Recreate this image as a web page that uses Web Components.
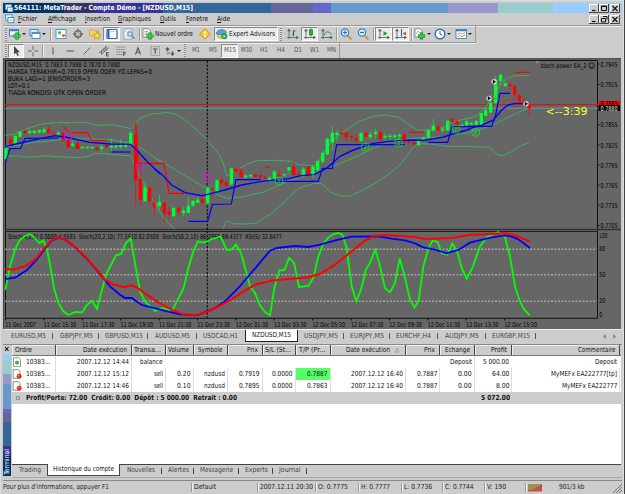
<!DOCTYPE html>
<html lang="fr">
<head>
<meta charset="utf-8">
<title>MetaTrader</title>
<style>
  body {
    margin: 0;
    width: 625px;
    height: 494px;
    overflow: hidden;
    background: #ccc;
    color: #111;
    font: 7px "DejaVu Sans Condensed", "DejaVu Sans", sans-serif;
  }
</style>
</head>
<body>
<meta-window></meta-window>

<script>
// ---------- icons, all on a 14x12 grid ----------
const plus = (x, y) => `<path d="M${x} ${y - 3.5}v7M${x - 3.5} ${y}h7" stroke="#087a12" stroke-width="3.2"/><path d="M${x} ${y - 3}v6M${x - 3} ${y}h6" stroke="#2fd437" stroke-width="1.8"/>`;
const axes = '<path d="M3 1.5v9.5M1 9.5h11M3 1l-1.3 2h2.6zM12.500 9.500l-2-1.200v2.400z" stroke="#555" stroke-width=".8"/>';
const ICONS = {
  newchart: `<rect x="1.500" y="1.500" width="9" height="6.500" fill="#eaf4fc" stroke="#3f86c4"/><path d="M1.500 2.500h9" stroke="#3f86c4" stroke-width="1.500"/>${plus(9, 8)}`,
  profiles: '<rect x="2" y="1.500" width="8" height="6" fill="#dceefb" stroke="#3f86c4"/><rect x="4" y="4.500" width="8" height="6" fill="#fff" stroke="#4a90d0"/><path d="M4 5.200h8" stroke="#4a90d0" stroke-width="1.500"/>',
  market: '<rect x="2" y="1.500" width="10" height="9" fill="#fff" stroke="#3c9bd0"/><path d="M4 5l1.500-2 1.500 2zM4 6h3" fill="#18b028" stroke="#18b028" stroke-width=".6"/><path d="M8 7l1.500 2 1.500-2z" fill="#f04020" stroke="#f04020"/>',
  cross: '<circle cx="7" cy="6" r="3.300" stroke="#555" stroke-width="1.100"/><path d="M7 .8v4M7 7.200v4M1.800 6h4M8.200 6h4" stroke="#555"/>',
  folder: '<path d="M1.500 2h4l1 1h4v5h-9z" fill="#f8d468" stroke="#c99a28" stroke-width=".8"/><path d="M9 3.500l1.200 2.500 2.800.3-2.100 1.900.6 2.800L9 9.700 6.500 11l.6-2.800L5 6.300 7.800 6z" fill="#ffe04a" stroke="#c48a12" stroke-width=".7"/>',
  navigator: '<rect x="2" y="1.500" width="10" height="9" rx="1" fill="#fff" stroke="#2c66b8" stroke-width="1.200"/><path d="M3.500 2v8" stroke="#2c66b8" stroke-width="2"/><path d="M5.500 3.500h5" stroke="#b8d0ec"/>',
  tester: '<rect x="2" y="1" width="8" height="10" fill="#eef6fc" stroke="#6fa4cc" stroke-width=".8"/><path d="M3.500 3l2 1.500 2-1.500M3.500 8h3" stroke="#d0a24c" stroke-width=".8"/><circle cx="8" cy="6" r="2.300" fill="#bfe2fa" stroke="#5088b8"/><path d="M10 8l2.500 2.500" stroke="#5088b8" stroke-width="1.500"/>',
  order: `<path d="M2 .8h5.500l2 2V9H2z" fill="#fff" stroke="#777" stroke-width=".8"/><path d="M3.500 3.500h3.500M3.500 5h4M3.500 6.500h3" stroke="#888" stroke-width=".7"/>${plus(9, 8)}`,
  diamond: '<path d="M7 .8L12.300 6 7 11.200 1.700 6z" fill="#fbcf28" stroke="#d08f10"/><path d="M7 3v3.700M7 7.600V9" stroke="#fff" stroke-width="1.500"/>',
  expert: '<path d="M2 6.500c.5 5 7 5 8 0z" fill="#f6cf52" stroke="#b98b18" stroke-width=".7"/><path d="M1 5.500C2 1 10 0 11.500 4.500 9 7 4 7 1 5.500z" fill="#4fa5d8" stroke="#2c76ac" stroke-width=".7"/><circle cx="9.300" cy="8.300" r="3" fill="#20a52c"/><path d="M8.500 6.900v2.800l2.300-1.400z" fill="#fff"/>',
  bars: `${axes}<path d="M7.500 2v6M6 6.500h1.500M7.500 3H9.500" stroke="#128a22" stroke-width="1.200"/>`,
  candles: `${axes}<path d="M8 .5v8" stroke="#128a22"/><rect x="6.500" y="1.800" width="3" height="5" fill="#20b830" stroke="#128a22" stroke-width=".8"/>`,
  line: `${axes}<path d="M4 7.500C6 3 8 2.500 11.500 6.500" stroke="#1b9a2b"/>`,
  zoomin: '<path d="M8.500 7.500l4 3.800" stroke="#cf9a2a" stroke-width="2.200"/><circle cx="6" cy="4.500" r="3.700" fill="#d9eeff" stroke="#3583cc" stroke-width="1.200"/><path d="M4 4.500h4M6 2.500v4" stroke="#2a6fc0" stroke-width="1.200"/>',
  zoomout: '<path d="M8.500 7.500l4 3.800" stroke="#cf9a2a" stroke-width="2.200"/><circle cx="6" cy="4.500" r="3.700" fill="#d9eeff" stroke="#3583cc" stroke-width="1.200"/><path d="M4 4.500h4" stroke="#2a6fc0" stroke-width="1.200"/>',
  scroll: `${axes}<path d="M6.500 3v5l4-2.500z" fill="#18a52c"/>`,
  shift: `${axes}<path d="M7.500 1v7.500" stroke="#2a6fb0" stroke-width="1.200"/><path d="M12 3.500L8.500 5.500l3.500 2z" fill="#d0551c"/>`,
  indicators: `<path d="M2 .8h5l2 2V9H2z" fill="#fff" stroke="#777" stroke-width=".8"/><path d="M3.500 6c1-4 2.500-3 3-1" stroke="#888" stroke-width=".7"/>${plus(8.500, 8)}`,
  clock: '<circle cx="7" cy="6" r="4.800" fill="#fff" stroke="#2b70cc" stroke-width="1.500"/><path d="M7 3v3.200l2.300 1" stroke="#444" stroke-width=".9"/>',
  template: '<rect x="2" y="1.500" width="10.500" height="9" fill="#fff" stroke="#3f80c0" stroke-width=".9"/><path d="M2 2.500h10.500" stroke="#3f80c0" stroke-width="1.600"/><path d="M3.500 6l2.500-1 2 1 3-1.500" stroke="#d07a3a" stroke-width=".8"/><path d="M3.500 9l2-1.500L8 8.500l3-1.500" stroke="#2da73c" stroke-width=".8"/>',
  cursor: '<path d="M5 1v8.500l2-1.800 1.500 3.300 1.300-.6L8.300 7.200H11z" fill="#444"/>',
  plain: '<path d="M7 .8v4M7 7.200v4M1.800 6h4M8.200 6h4" stroke="#666"/>',
  vline: '<path d="M7 2.500v7" stroke="#555"/>',
  hline: '<path d="M3.500 6h7.500" stroke="#555"/>',
  trend: '<path d="M3.500 9.500l7-7" stroke="#666"/>',
  channel: '<path d="M2 8l8-7M4 9.500l8-7M4.500 5v4M7 3v4M9 1.500v4" stroke="#555" stroke-width=".8"/><path d="M11.800 7.500H9.500v3.500h2.500M9.500 9.200h2" stroke="#444" stroke-width=".8"/>',
  fibo: '<path d="M2.500 2H11M2.500 4.500H11M2.500 7H11M2.500 9.500H8" stroke="#777" stroke-width=".8" stroke-dasharray="1.500 .5"/><path d="M12 7.500H9.500V11M9.500 9.200h2" stroke="#444" stroke-width=".8"/>',
  text: '<path d="M4.500 9.500L7 2.800l2.500 6.700M5.500 7.200h3" stroke="#555" stroke-width="1.100"/>',
  label: '<rect x="3" y="1.500" width="8.500" height="9" stroke="#777" stroke-width=".8" stroke-dasharray="1 .7"/><path d="M5 4h4.500M7.200 4v4.700" stroke="#555" stroke-width="1.100"/>',
  arrows: '<path d="M2 4.500L4.500 2 7 4.500H5.300V6.500H3.700v-2zM7 8.500h1.700v-2h1.600v2H12L9.500 11z" fill="#555"/><path d="M4 8l1 1 2-2" stroke="#555" stroke-width=".8"/>',
  app: '<rect x="2" y="1" width="8.500" height="7" fill="#e8f6ff" stroke="#4a9bd8" stroke-width="1.300"/><rect x="5" y="4.500" width="7.500" height="6.500" fill="#fff" stroke="#3f86c4" stroke-width="1.200"/><path d="M6.500 8h4.500" stroke="#6ab0e0"/>',
  deposit: '<path d="M3 .8h6l2 2v8.500H3z" fill="#fff" stroke="#777" stroke-width=".9"/><circle cx="7" cy="6.500" r="2.200" fill="#159a28"/><circle cx="7" cy="6.500" r=".7" fill="#fff"/>',
  sell: '<path d="M2.500 .8h6l2 2v8H2.500z" fill="#fff" stroke="#666" stroke-width=".9"/><circle cx="9.500" cy="8.500" r="2.900" fill="#e2321c"/><circle cx="8.800" cy="7.800" r=".9" fill="#ff9c80"/>',
  ring: '<circle cx="7" cy="6" r="2" stroke="#888" stroke-width="1.200"/>'
};
const icon = (name, w = 14) => `<svg width="${w}" height="${w * 12 / 14}" viewBox="0 0 14 12" fill="none">${ICONS[name]}</svg>`;
const fit = (text, w, cls = "") => `<fit-text w="${w}" class="${cls}">${text}</fit-text>`;

// ---------- title bar + menu ----------
class TitleBar extends HTMLElement {
  constructor() {
    super();
    this.attachShadow({ mode: "open" }).innerHTML = `
    <style>
      :host { display: block; }
      .title, .menu { display: flex; align-items: center; box-sizing: border-box; }
      .title {
        height: 10px;
        padding-left: 1px;
        color: #fff;
        font-weight: bold;
        background: linear-gradient(90deg, #036 0 61px, #336 61px 92px, #339 92px 160px, #369 160px 268px,
          #669 268px 310px, #66c 310px 328px, #69c 328px 445px, #99c 445px 495px, #9cc 495px 550px, #9cf 550px);
      }
      .menu { height: 13px; padding-left: 1px; border-bottom: 1px solid #999; box-shadow: 0 1px #eee; }
      .title svg { margin-right: 0; }
      .menu fit-text { margin-left: 3px; }
      u { text-decoration-thickness: .6px; text-underline-offset: 1px; }
      .boxes { margin-left: auto; display: flex; padding-right: 2px; }
      .boxes svg { margin: 0; background: #ccc; }
      .boxes svg:last-child { margin-left: 1px; }
    </style>
    <div class="title">${icon("app", 10)}${fit("564111: MetaTrader - Compte Démo - [NZDUSD,M15]", 179)}${this.boxes('<path d="M2.500 2h5v4.500h-5zM2.500 2.500h5" stroke="#111"/>')}</div>
    <div class="menu">${icon("app", 11)}${[["Fichier", 19, 11], ["Affichage", 28, 8.500], ["Insertion", 25, 8.500], ["Graphiques", 33, 9], ["Outils", 16, 10], ["Fenetre", 22, 9], ["Aide", 13, 0]]
      .map(([t, w, g]) => `<fit-text w="${w}" style="margin-right:${g - 3}px"><u>${t[0]}</u>${t.slice(1)}</fit-text>`).join("")}${this.boxes('<path d="M4 1.500h4v3M2.500 3.500h4v3.500h-4z" stroke="#111"/>')}</div>`;
  }

  boxes(middle) {
    const box = (glyph) => `<svg width="10" height="9" viewBox="0 0 10 9" fill="none"><path d="M.5 8.500V.5h9" stroke="#fff"/><path d="M0 8.500h9.500V0" stroke="#444"/>${glyph}</svg>`;
    return `<div class="boxes">${box('<path d="M3 6.500h3.500" stroke="#111" stroke-width="1.200"/>')}${box(middle)}${box('<path d="M2.500 2l5 5M7.500 2l-5 5" stroke="#111" stroke-width="1.100"/>')}</div>`;
  }
}

// ---------- toolbar pieces ----------
class ToolButton extends HTMLElement {
  connectedCallback() {
    const name = this.getAttribute("icon");
    this.attachShadow({ mode: "open" }).innerHTML = `
    <style>
      :host { display: flex; align-items: center; justify-content: center; height: 14px; box-sizing: border-box; flex: none; }
      :host([caret]), :host([wide]) { justify-content: flex-start; }
      :host([on]) { background: #ececec; border: 1px solid; border-color: #888 #fff #fff #888; }
      svg { flex: none; }
      .caret { border: 2px solid transparent; border-top-color: #222; border-bottom: 0; }
    </style>
    ${name ? icon(name) : ""}<slot></slot>${this.hasAttribute("caret") ? '<i class="caret"></i>' : ""}`;
  }
}

class ToolGap extends HTMLElement {
  constructor() {
    super();
    this.attachShadow({ mode: "open" }).innerHTML = `
    <style>
      :host { display: flex; justify-content: center; flex: none; height: 13px; }
      i { width: 1px; background: #999; box-shadow: 1px 0 #eee; }
      :host([grip]) i { width: 2px; background: repeating-linear-gradient(#888 0 1px, #ddd 1px 2px); box-shadow: none; }
      :host([blank]) i { display: none; }
    </style><i></i>`;
  }
}

class ToolBars extends HTMLElement {
  constructor() {
    super();
    const b = (name, w = 17, attrs = "", body = "") => `<tool-button icon="${name}" style="width:${w}px" ${attrs}>${body}</tool-button>`;
    const gap = (w, attrs = "") => `<tool-gap style="width:${w}px" ${attrs}></tool-gap>`;
    const frame = (t, w) => `<tool-button style="width:17px" ${t == "M15" ? "on" : ""}>${fit(t, w)}</tool-button>`;
    this.attachShadow({ mode: "open" }).innerHTML = `
    <style>
      :host { display: block; }
      div { display: flex; align-items: center; box-sizing: border-box; border: solid #999; border-width: 0 1px 1px 0; box-shadow: 0 1px #eee; }
      .main { width: 473px; height: 17px; }
      .draw { width: 337px; height: 15px; border-bottom: 0; box-shadow: none; color: #555; }
    </style>
    <div class="main">
      ${gap(5, "grip")}${b("newchart", 20, "caret")}${b("profiles", 21, "caret")}${gap(3)}
      ${b("market")}${b("cross")}${b("folder")}${b("navigator", 17, "on")}${b("tester")}${gap(4)}
      ${b("order", 56, "wide", fit("Nouvel ordre", 38))}${b("diamond", 15)}${gap(2, "blank")}
      ${b("expert", 64, "wide on", fit("Expert Advisors", 46))}${gap(6, "grip")}
      ${b("bars")}${b("candles", 17, "on")}${b("line")}${gap(2)}${b("zoomin")}${b("zoomout")}${gap(4)}
      ${b("scroll", 17, "on")}${b("shift", 17, "on")}${gap(4)}${b("indicators", 20, "caret")}${b("clock", 21, "caret")}${b("template", 19, "caret")}
    </div>
    <div class="draw">
      ${gap(5, "grip")}${b("cursor", 16, "on")}${b("plain")}${gap(3)}${b("vline")}${b("hline")}${b("trend")}${b("channel")}${b("fibo")}${b("text")}${b("label")}
      ${b("arrows", 20, "caret")}${gap(4, "grip")}
      ${[["M1", 8], ["M5", 8], ["M15", 12], ["M30", 11], ["H1", 8], ["H4", 8], ["D1", 8], ["W1", 9], ["MN", 9]].map(([t, w]) => frame(t, w)).join("")}
    </div>`;
  }
}

// ---------- price chart and oscillator ----------
// Series are stored per tile: x is the tile's left edge, three units per pixel.
const PRICE = [
  { x: 0,
    band: ["16,241 40,238 80,222 120,208 160,203 262,203 290,211 340,209 392,221 405,208 420,190 440,182 460,176 480,175",
           "16,275 60,270 100,262 150,258 190,252 260,251 330,254 395,265 430,283 480,320",
           "16,303 60,303 80,307 140,302 170,305 240,308 262,305 285,295 330,297 392,303 405,330 430,385 455,430 480,463"],
    ma: ["16,275 60,264 110,253 165,242 195,246 270,262 330,267 392,268 405,280 440,318 480,356"],
    low: ["16,325 30,281 62,280 75,250 176,249", "334,291 392,291"],
    high: ["190,214 205,233 262,233 275,257 322,256", "407,205 415,325 480,325"],
    bars: "g18,270,280,312,318 r32,245,252,267,270 g46,240,243,267,270 g60,228,231,245,248 r75,224,228,234,236 g89,225,228,234,238 g103,225,228,234,236 g118,222,226,232,236 g132,216,223,231,236 r146,211,223,235,237 r161,230,233,236,240 g175,228,233,238,242 r190,230,234,256,258 r205,250,253,276,278 g218,256,266,272,276 r233,260,265,281,283 g247,274,276,279,282 g262,273,276,279,282 g276,274,276,280,282 r291,276,280,285,288 g305,268,275,281,292 r320,268,270,276,280 g334,250,273,278,290 g348,266,272,277,282 g362,252,268,276,282 g377,260,269,275,280 g392,228,234,268,272 r407,205,240,376,455 r421,320,372,434,450 g435,380,398,438,440 r449,395,398,437,452 r463,430,444,456,484 g478,420,441,453,455" },
  { x: 155,
    band: ["15,175 35,172 60,177 90,195 125,225 157,255 190,295 205,325 215,363 240,350 275,328 305,317 360,316 410,319 430,329 480,333",
           "0,308 45,335 90,362 157,402 190,420 217,430 260,426 330,410 390,382 440,365 480,355",
           "0,445 20,480 45,510 60,522", "203,522 215,497 235,506 270,507 305,504 350,475 400,430 430,400 480,385"],
    ma: ["0,343 20,358 50,390 90,413 140,422 170,415 220,402 260,390 320,379 400,371 440,362 480,358"],
    low: ["100,499 158,499 172,448 229,447 243,374 317,374", "362,379 480,379"],
    high: ["0,325 27,325 42,415 87,415", "237,343 258,343", "330,336 344,336"],
    bars: "r28,440,443,475,500 r42,455,470,477,495 g56,455,459,483,486 r71,450,460,472,478 g85,455,467,474,484 g100,425,453,473,475 g114,435,438,452,454 g128,425,434,443,445 r142,420,432,442,452 g158,395,398,445,448 r172,398,402,405,425 g186,373,376,408,410 r200,360,375,384,398 r214,375,384,392,405 g229,338,340,388,390 r243,340,344,350,355 r258,345,348,366,370 g272,358,362,367,372 g287,358,360,364,368 r301,355,359,365,367 r316,358,361,367,372 r330,362,366,369,376 g344,362,369,376,382 g358,345,350,370,372 r373,345,359,363,368 g388,355,358,361,366 g402,335,337,346,357 r416,318,335,360,362 r431,350,358,364,368 g445,336,342,359,361 r460,332,335,362,364" },
  { x: 310,
    band: ["15,331 25,320 60,265 100,230 150,198 190,184 225,180 265,186 290,204 320,225 360,226 400,218 430,200 480,189",
           "15,354 60,338 120,313 190,280 250,258 300,250 350,248 400,245 440,238 480,233",
           "15,385 35,386 65,413 90,423 120,423 160,405 220,370 270,330 300,290 318,270 335,266 370,268 410,274 480,274"],
    ma: ["13,358 50,340 90,304 130,285 190,265 240,259 300,255 345,256 400,246 440,234 480,222"],
    low: ["0,379 25,379 37,340 67,340 80,269 284,269", "355,262 413,262 426,215 480,215"],
    high: ["297,232 342,232"],
    bars: "g9,330,336,357,368 g23,315,319,345,350 g38,286,294,320,325 g52,248,252,298,300 g67,215,234,262,285 g81,226,234,240,262 r95,220,234,237,240 r109,230,233,246,257 r125,240,244,248,258 r139,235,250,257,263 g153,232,234,257,262 r168,230,234,245,250 g181,230,239,246,252 g197,222,231,237,250 r211,228,231,252,260 g225,235,243,247,255 g240,235,242,246,255 g254,235,242,246,255 g268,235,240,244,255 r283,232,239,262,265 r297,256,260,263,265 r312,258,262,268,272 g326,255,257,270,272 g340,246,248,252,254 g355,220,226,246,248 g370,192,212,226,230 r384,210,214,227,230 g398,214,222,226,232 g413,195,198,226,228 r427,188,192,199,201 r441,195,199,213,215 g456,205,210,214,216" },
  { x: 465,
    band: ["12,190 35,182 65,152 90,120 105,88 125,70 145,63 192,61",
           "12,231 50,222 90,207 130,187 165,170 190,161",
           "12,275 70,276 85,287 100,300 115,302 140,290 165,273 192,263"],
    ma: ["12,221 50,211 85,195 110,165 130,150 150,145 190,145"],
    low: ["0,214 80,214 92,180 105,115 135,115"],
    high: ["150,52 194,52"],
    bars: "g5,190,200,213,215 g19,200,204,208,214 g34,195,198,209,211 g49,172,175,208,210 g62,158,166,182,185 g77,120,144,172,174 g92,62,75,143,150 g107,55,60,77,90 g121,80,85,93,96 r135,82,88,93,103 r149,88,94,119,135 r163,115,121,137,145 r178,130,137,145,150 r193,148,152,161,181" }
];
const OSC = [
  { x: 0,
    fast: "16,185 30,115 45,65 58,38 75,24 90,18 103,28 118,45 130,38 140,60 150,110 162,180 175,225 190,250 205,261 225,252 247,253 260,232 276,218 291,243 305,190 318,140 348,82 363,78 378,45 392,31 405,105 420,190 435,220 450,235 465,249 490,240 505,246 518,245 535,212 551,180 565,120 580,70 594,40 609,44 630,38",
    mid: "16,153 45,149 80,127 110,95 140,55 155,38 175,29 195,35 220,53 260,92 290,126 330,175 360,200 375,210 395,210 425,231 480,245 540,259 590,262 630,247",
    slow: "16,122 40,125 75,115 105,95 135,58 155,36 175,28 195,34 220,52 260,90 290,124 315,155 340,170 375,178 392,172 410,178 440,200 480,226 520,248 550,259 590,261 630,248" },
  { x: 205,
    fast: "15,35 47,26 65,66 80,65 93,50 108,75 123,130 135,175 150,195 165,232 180,252 195,262 208,180 223,127 238,126 252,90 267,104 282,177 310,174 325,150 340,85 355,48 370,28 385,18 400,15 412,20 425,60 440,175 454,220 468,185 483,125 497,100 511,65 525,115 540,180 555,193 570,165 584,91 600,150 615,215 630,242",
    mid: "0,254 30,240 60,220 100,180 160,110 195,68 215,60 270,54 310,57 345,50 400,35 440,26 520,25 560,32 600,37 630,46",
    slow: "0,254 30,240 70,220 120,188 150,170 200,158 240,154 300,149 345,138 390,110 440,70 480,38 510,23 540,21 630,27" },
  { x: 415,
    fast: "0,236 11,218 25,115 40,62 53,38 68,42 80,75 97,80 112,47 126,68 140,120 155,153 172,120 195,55 215,28 250,12 270,28 285,85 300,175 315,222 328,245 345,262",
    mid: "0,46 25,58 60,65 95,76 130,66 165,44 230,28 270,22 290,26 310,34 345,60",
    slow: "0,27 30,33 110,30 160,21 230,18 270,16 300,22 345,41" }
];

class PriceChart extends HTMLElement {
  constructor() {
    super();
    this.attachShadow({ mode: "open" }).innerHTML = `
    <style>
      :host { display: block; height: 271px; }
      svg { display: block; }
      text { fill: #000; font-size: 6.6px; }
      polyline { fill: none; }
      .band { stroke: #3cb464; stroke-width: 2.8; }
      .ma { stroke: #00f; stroke-width: 4.2; }
      .low { stroke: #00f; stroke-width: 3.6; }
      .high { stroke: #f00; stroke-width: 3.4; }
      .fast { stroke: #0f0; stroke-width: 5.5; }
      .mid { stroke: #00f; stroke-width: 5.5; }
      .slow { stroke: #f00; stroke-width: 6; }
      .clock { fill: #ffff1e; font: 10.500px "DejaVu Sans", sans-serif; }
      .white { fill: #eee; }
    </style>
    <svg width="620" height="271" viewBox="3 58 620 271">
      <rect x="3" y="58" width="618" height="271" fill="#666"/>
      <path d="M3 58.700h618" stroke="#555" stroke-width="1.400"/>
      <path d="M3.500 59v270" stroke="#444"/>
      <path d="M5.500 317.500V60.500H597.500V318" fill="none" stroke="#111"/>
      <path d="M5 229.500h616" stroke="#333" stroke-width="1.600"/><path d="M5 231.500h593" stroke="#222"/>
      <path d="M5 318.300h593" stroke="#111"/>
      <path d="M207.300 61v257" stroke="#000" stroke-dasharray="2.200 1.500"/>
      <path d="M5 104.600h593" stroke="#d01818" stroke-width="1.100"/>
      <path d="M5 108.300h593" stroke="#5f9c9c"/>
      <path d="M5 249.200h592M5 274.800h592M5 301.200h592" stroke="#ccc" stroke-width=".9" stroke-dasharray="2 1.500"/>
      <path d="M535 61h5l-2.500 2.500z" fill="#5fa8b0"/>
      ${PRICE.map((tile) => this.priceTile(tile)).join("")}
      ${this.legend()}
      ${OSC.map((o) => `<g transform="translate(${o.x} 228) scale(.33333)">
        <polyline class="fast" points="${o.fast}"/><polyline class="mid" points="${o.mid}"/><polyline class="slow" points="${o.slow}"/></g>`).join("")}
      ${this.marks()}
      ${this.scales()}
    </svg>`;
  }

  text(x, y, w, body, cls = "") {
    return `<text x="${x}" y="${y}" textLength="${w}" lengthAdjust="spacingAndGlyphs" class="${cls}">${body}</text>`;
  }

  priceTile(tile) {
    const lines = (cls) => tile[cls].map((p) => `<polyline class="${cls}" points="${p}"/>`).join("");
    const bars = tile.bars.split(" ").map((s) => {
      const [x, hi, top, bottom, lo] = s.slice(1).split(",").map(Number);
      const colour = s[0] == "g" ? "#0f3" : "#f00";
      return `<path d="M${x} ${hi}V${lo}" stroke="${colour}" stroke-width="2.400" stroke-opacity=".8"/><path d="M${x - 5} ${top - .5}h10V${bottom + .5}h-10z" fill="${colour}"/>`;
    }).join("");
    return `<g transform="translate(${tile.x} 55) scale(.33333)">${lines("band")}${bars}${lines("high")}${lines("low")}${lines("ma")}</g>`;
  }

  marks() {
    const ring = (x, y, colour) => `<circle cx="${x}" cy="${y}" r="4" fill="none" stroke="${colour}" stroke-width=".9"/><path d="M${x - 1.500} ${y - 1.500}h3l-3 3h3" fill="none" stroke="${colour}" stroke-width=".8"/>`;
    const trade = (x, y) => `<circle cx="${x}" cy="${y}" r="2.600" fill="#ddd"/><path d="M${x - 1.200} ${y - 2.300}l3.200 2.300-3.200 2.300z" fill="#111"/>`;
    return `<circle cx="68" cy="136" r="4" fill="none" stroke="#f0f" stroke-width=".8"/><circle cx="140" cy="166.300" r="4" fill="none" stroke="#f0f" stroke-width=".8"/>
      ${ring(206.700, 177, "#e010e0")}${ring(279, 181, "#14cf28")}${ring(365.300, 147.300, "#14cf28")}${ring(398.700, 143, "#14cf28")}${ring(456, 129, "#14cf28")}${ring(475.700, 132.300, "#14e028")}
      <path d="M491 98l35 5.500" stroke="#e02020" stroke-width=".8" stroke-dasharray="2 1.500"/>
      ${trade(494, 81.700)}${trade(489, 98.300)}${trade(526, 103.700)}`;
  }

  legend() {
    return this.text(8, 67, 112, "NZDUSD,M15&#160; 0.7883 0.7888 0.7870 0.7880")
      + this.text(8, 74, 144, "HARGA TERAKHIR=0.7919 OPEN ODER YG LEPAS=0")
      + this.text(8, 81, 82, "BUKA LAGI=1 JENISORDER=3")
      + this.text(8, 88, 22, "LOT=0.1")
      + this.text(8, 95.200, 98, "TIADA KONDISI UTK OPEN ORDER")
      + this.text(540.500, 68.300, 46, "stoch power EA_2")
      + '<circle cx="591.700" cy="65.700" r="2.900" fill="none" stroke="#111" stroke-width=".8"/><path d="M590 66.500q1.700 2 3.400 0M590.500 64.800h.6M592.300 64.800h.6" fill="none" stroke="#111" stroke-width=".7"/>'
      + this.text(8, 239.300, 274, "Stoch(4,2,3) 0.0000 4.5593&#160; Stoch(20,2,10) 77.5510 82.0508&#160; Stoch(50,2,10) 86.2069 89.4377&#160; RSI(5) 32.8477")
      + this.text(545.500, 114.800, 42, "&lt;--3:39", "clock");
  }

  scales() {
    const prices = [[64.500, "0.7945"], [85, "0.7915"], [125.300, "0.7855"], [145.500, "0.7825"], [165.500, "0.7795"], [185.700, "0.7765"], [205.700, "0.7735"], [226, "0.7705"]];
    const hours = ["11 Dec 2007", "11 Dec 15:30", "11 Dec 17:30", "11 Dec 19:30", "11 Dec 21:30", "11 Dec 23:30", "12 Dec 01:30", "12 Dec 03:30", "12 Dec 05:30", "12 Dec 07:30", "12 Dec 09:30", "12 Dec 11:30", "12 Dec 13:30", "12 Dec 15:30"];
    return prices.map(([y, t]) => `<path d="M597 ${y - .5}h2.500" stroke="#111"/>` + this.text(600.500, y + 2, 17, t)).join("")
      + '<rect x="598.500" y="101" width="21.500" height="4.500" fill="#f00"/>'
      + this.text(600.500, 106.300, 17, "0.7885")
      + '<rect x="598.500" y="105" width="21.500" height="6" fill="#000"/>'
      + this.text(600.500, 110.500, 17, "0.7880", "white")
      + [[235.500, "100", 8], [248.800, "80", 6], [274.800, "50", 6], [301, "20", 6], [314.800, "0", 3]].map(([y, t, w]) => this.text(599.300, y + 2.300, w, t)).join("")
      + hours.map((t, i) => {
        const x = 5 + i * 38.400;
        return `<path d="M${x + .5} 318v2.500" stroke="#111"/>` + this.text(x + .300, 326.800, i ? 32.500 : 30.500, t);
      }).join("");
  }
}

// ---------- tabs under the charts ----------
class ChartTabs extends HTMLElement {
  constructor() {
    super();
    const tabs = [["EURUSD,M5", 35, 50], ["GBPJPY,M5", 33, 46], ["GBPUSD,M15", 38, 49], ["AUDUSD,M5", 35, 48.5], ["USDCAD,H1", 35, 48], ["NZDUSD,M15", 39, 53], ["USDJPY,M5", 34, 46], ["EURJPY,M5", 34, 46], ["EURCHF,H4", 35, 48], ["AUDJPY,M5", 34, 48], ["EURGBP,M15", 38, 50]];
    this.attachShadow({ mode: "open" }).innerHTML = `
    <style>
      :host { display: flex; height: 14px; border-top: 1px solid #eee; box-sizing: border-box; color: #444; }
      span { display: flex; flex: none; height: 12px; align-items: center; justify-content: center; box-sizing: border-box; background: linear-gradient(#555, #555) 100% 55% / 1px 6px no-repeat; }
      .on { background: #fff; color: #111; border: 1px solid #222; border-top: 0; }
      .quiet { background: none; }
      svg { margin-left: auto; margin-right: 3px; }
    </style>
    ${tabs.map(([t, w, box], i) => `<span class="${i == 5 ? "on" : i == 4 ? "quiet" : ""}" style="width:${box}px">${fit(t, w)}</span>`).join("")}
    <svg width="18" height="12" fill="#888"><path d="M5 4v5L2 6.500zM12 4v5l3-2.500z"/></svg>`;
  }
}

// ---------- terminal panel ----------
class TerminalPanel extends HTMLElement {
  constructor() {
    super();
    // [label, label width, cell width, align]
    const cols = [["Ordre", 17, 43.5, "start"], ["Date exécution", 44, 76, "end"], ["Transa...", 27, 34, "end"], ["Volume", 21, 28, "end"], ["Symbole", 24.5, 34, "end"], ["Prix", 11, 35, "end"], ["S/L (St...", 26, 33, "end"], ["T/P (Pr...", 26.5, 35, "end"], ["Date exécution", 44, 75.5, "end"], ["Prix", 11, 34, "end"], ["Echange", 25, 34.5, "end"], ["Profit", 16, 37.5, "end"], ["Commentaire", 37.5, 108, "end"]];
    const rows = [
      ["deposit", ["10383...", 24.5], ["2007.12.12 14:44", 52], ["balance", 22.5], "", "", "", "", "", "", "", ["Deposit", 22], ["5 000.00", 26], ["Deposit", 22]],
      ["sell", ["10385...", 24.5], ["2007.12.12 15:12", 52], ["sell", 9], ["0.20", 13.5], ["nzdusd", 21], ["0.7919", 20.5], ["0.0000", 20.5], ["0.7887", 20.5], ["2007.12.12 16:40", 52], ["0.7887", 20.5], ["0.00", 13.5], ["64.00", 17.5], ["MyMEFx EA222777[tp]", 66]],
      ["sell", ["10383...", 24.5], ["2007.12.12 14:46", 52], ["sell", 9], ["0.10", 13.5], ["nzdusd", 21], ["0.7895", 20.5], ["0.0000", 20.5], ["0.7863", 20.5], ["2007.12.12 16:40", 52], ["0.7887", 20.5], ["0.00", 13.5], ["8.00", 13.5], ["MyMEFx EA222777", 55.5]]
    ];
    const tabs = [["Trading", 22, 35], ["Historique du compte", 61, 73], ["Nouvelles", 28, 42], ["Alertes", 21, 32], ["Messagerie", 33, 45], ["Experts", 23, 34], ["Journal", 21.5, 33.5]];
    this.attachShadow({ mode: "open" }).innerHTML = `
    <style>
      :host { display: flex; height: 135px; box-sizing: border-box; border-top: 1px solid #888; }
      .side { width: 8px; flex: none; display: flex; flex-direction: column; }
      .side svg { flex: none; }
      .strip {
        flex: 1; color: #fff; display: flex; align-items: flex-end; justify-content: center; margin-bottom: 3px;
        background: linear-gradient(#9cf 0 6px, #9cc 6px 20px, #99c 20px 30px, #69c 30px 55px, #66c 55px 59px, #669 59px 68px, #369 68px 92px, #339 92px 102px, #036 102px);
      }
      .strip b { writing-mode: vertical-rl; transform: rotate(180deg); font-weight: normal; font-size: 6.8px; line-height: 8px; padding-top: 1px; }
      .body { flex: 1; margin-left: 1px; display: flex; flex-direction: column; min-width: 0; }
      .table { height: 120px; background: #fff; border-bottom: 1px solid #444; box-sizing: border-box; overflow: hidden; margin-right: 1px; }
      .row, .head { display: grid; grid-template-columns: ${cols.map((c) => c[2] + "px").join(" ")}; }
      .head { height: 11px; grid-template-rows: 10px; background: #ccc; border-bottom: 1px solid #777; box-sizing: border-box; }
      .row { height: 12px; grid-template-rows: 12px; }
      .head span, .row span { display: flex; align-items: center; box-sizing: border-box; padding: 0 2px; border-right: 1px solid #ddd; min-width: 0; }
      .head span { border-right-color: #444; padding: 0 4px 0 3px; box-shadow: inset 1px 1px #eee; }
      .row span:first-child { padding-left: 0; }
      span.end { justify-content: flex-end; }
      svg { flex: none; }
      .row svg { margin-right: 3px; margin-left: -1px; }
      .plain span { border-color: #fff; }
      .plain span:nth-child(-n+2), .plain span:nth-child(11) { border-color: #ddd; }
      .row .hit { background: #5f6; }
      .total { height: 12px; background: #ccc; display: flex; align-items: center; font-weight: bold; }
      .total .sum { margin-left: 244px; }
      .total svg { margin-right: 2px; }
      .tabs { display: flex; height: 13px; color: #444; border-bottom: 1px solid #aaa; box-sizing: border-box; }
      .tabs span { display: flex; flex: none; box-sizing: border-box; align-items: center; justify-content: center; height: 11px; background: linear-gradient(#444, #444) 100% 55% / 1px 6px no-repeat; }
      .tabs .on { background: #fff; color: #111; border: 1px solid #444; border-top: 0; margin-top: -1px; height: 12px; }
      .tabs .quiet { background: none; }
    </style>
    <div class="side">
      <svg width="8" height="9"><path d="M2 2l3.500 4M5.500 2L2 6" stroke="#111" stroke-width="1.100"/></svg>
      <div class="strip"><b>Terminal</b></div>
    </div>
    <div class="body">
      <div class="table">
        <div class="head">${cols.map(([t, w, , align], i) => `<span class="${align}">${fit(t, w)}${i == 8 ? '<svg width="11" height="6"><path d="M5 5l2-4 2 4z" fill="none" stroke="#999" stroke-width=".8"/></svg>' : ""}</span>`).join("")}</div>
        ${rows.map(([glyph, ...cells], r) => `<div class="row ${r ? "" : "plain"}">${cells.map((c, i) => `<span class="${cols[i][3]} ${r == 1 && i == 7 ? "hit" : ""}">${i ? "" : icon(glyph, 12)}${c ? fit(c[0], c[1]) : ""}</span>`).join("")}</div>`).join("")}
        <div class="total">${icon("ring", 12)}${fit("Profit/Perte: 72.00&#160; Crédit: 0.00&#160; Dépôt : 5 000.00&#160; Retrait : 0.00", 211)}${fit("5 072.00", 29, "sum")}</div>
      </div>
      <div class="tabs">${tabs.map(([t, w, box], i) => `<span class="${i == 1 ? "on" : i ? "" : "quiet"}" style="width:${box}px">${fit(t, w)}</span>`).join("")}</div>
    </div>`;
  }
}

class StatusBar extends HTMLElement {
  constructor() {
    super();
    const cells = [["Default", 22, 66], ["2007.12.11 20:30", 53, 58], ["O: 0.7775", 30, 43], ["H: 0.7777", 29, 43], ["L: 0.7736", 28, 41], ["C: 0.7744", 28.5, 42], ["V: 190", 19, 41]];
    this.attachShadow({ mode: "open" }).innerHTML = `
    <style>
      :host { display: flex; height: 14px; align-items: center; color: #222; box-sizing: border-box; border-top: 1px solid #eee; }
      span { flex: none; box-sizing: border-box; height: 9px; display: flex; align-items: center; border-left: 1px solid #999; padding-left: 2px; box-shadow: inset 1px 0 #eee; }
      .hint { width: 188px; border: 0; padding: 0; box-shadow: none; }
    </style>
    <span class="hint">${fit("Pour plus d'informations, appuyer F1", 106)}</span>
    ${cells.map(([t, w, box]) => `<span style="width:${box}px">${fit(t, w)}</span>`).join("")}
    <span style="width:34px"><svg width="15" height="9"><path d="M1 1v7M3 1v6.500M5 1v6M7 1v5M9 1v4M11 1v3M13 1v2" stroke="#8a7a20" stroke-width="1.400"/><path d="M1 7.500v1M3 7v1.500M5 6.500v2M7 5.500v3M9 4.500v4M11 3.500v5M13 2v6.500" stroke="#c41c1c" stroke-width="1.400"/></svg></span>
    ${fit("901/3 kb", 25.5)}
    <svg width="10" height="12" style="margin-left:auto"><path d="M1 11L10 2M4 11l6-6M7 11l3-3" stroke="#777"/></svg>`;
  }
}

class MetaWindow extends HTMLElement {
  constructor() {
    super();
    this.attachShadow({ mode: "open" }).innerHTML = `
    <style>
      :host { display: block; height: 494px; box-sizing: border-box; padding: 3px 2px 0 3px; border-right: 1px solid #444; box-shadow: inset -1px 0 #ddd, inset 1px 1px #ddd; }
      tool-bars { height: 32px; }
      terminal-panel { margin-top: 1px; }
      status-bar { margin-top: 1px; border-top: 1px solid #888; }
    </style>
    <title-bar></title-bar>
    <tool-bars></tool-bars>
    <price-chart></price-chart>
    <chart-tabs></chart-tabs>
    <terminal-panel></terminal-panel>
    <status-bar></status-bar>`;
  }
}

// Squeezes or stretches its text to the width given in "w".
class FitText extends HTMLElement {
  constructor() {
    super();
    this.attachShadow({ mode: "open" }).innerHTML = `
    <style>
      :host { display: block; flex: none; height: 9px; line-height: 9px; }
      span { display: inline-block; white-space: pre; transform-origin: 0 50%; }
    </style><span><slot></slot></span>`;
  }

  connectedCallback() {
    const span = this.shadowRoot.querySelector("span");
    const w = parseFloat(this.getAttribute("w"));
    span.style.transform = `scaleX(${w / span.getBoundingClientRect().width})`;
    this.style.width = w + "px";
  }
}

customElements.define("meta-window", MetaWindow);
customElements.define("title-bar", TitleBar);
customElements.define("tool-bars", ToolBars);
customElements.define("tool-button", ToolButton);
customElements.define("tool-gap", ToolGap);
customElements.define("price-chart", PriceChart);
customElements.define("chart-tabs", ChartTabs);
customElements.define("terminal-panel", TerminalPanel);
customElements.define("status-bar", StatusBar);
customElements.define("fit-text", FitText);
</script>
</body>
</html>
